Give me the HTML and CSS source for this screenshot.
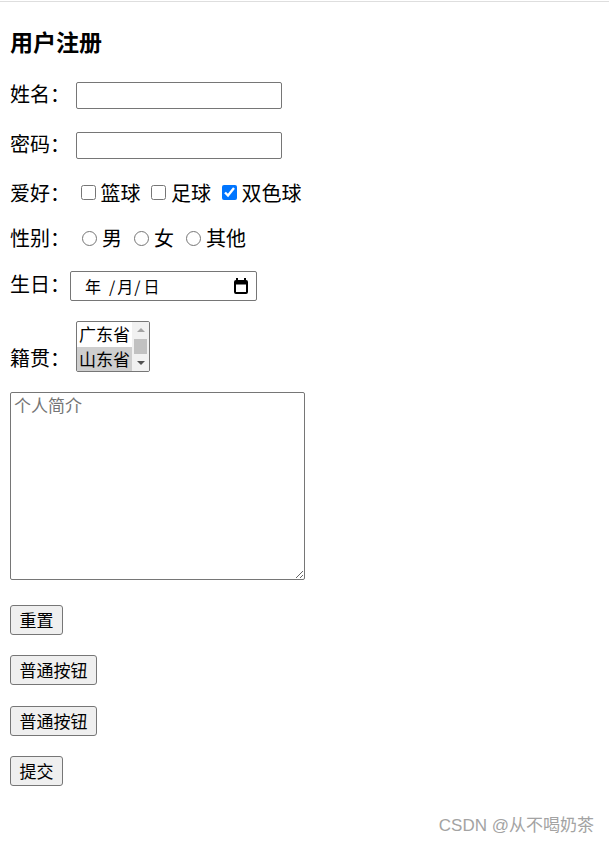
FILE: index.html
```html
<!DOCTYPE html>
<html lang="zh-CN">
<head>
<meta charset="utf-8">
<title>用户注册</title>
<link rel="stylesheet" href="styles.css">
</head>
<body>
<div class="topline"></div>
<form class="form">
  <h3 class="title">用户注册</h3>

  <div class="row row-name">
    <span class="lbl">姓名：</span>
    <input class="text-input" type="text" name="username">
  </div>

  <div class="row row-pwd">
    <span class="lbl">密码：</span>
    <input class="text-input" type="password" name="password">
  </div>

  <div class="row row-hobby">
    <span class="lbl lbl-plain">爱好：</span>
    <label class="opt"><input class="check" type="checkbox" name="hobby">篮球</label>
    <label class="opt"><input class="check" type="checkbox" name="hobby">足球</label>
    <label class="opt"><input class="check" type="checkbox" name="hobby" checked>双色球</label>
  </div>

  <div class="row row-gender">
    <span class="lbl lbl-plain">性别：</span>
    <label class="opt"><input class="radio" type="radio" name="gender">男</label>
    <label class="opt"><input class="radio" type="radio" name="gender">女</label>
    <label class="opt"><input class="radio" type="radio" name="gender">其他</label>
  </div>

  <div class="row row-birth">
    <span class="lbl">生日：</span>
    <div class="date" role="textbox" aria-label="生日">
      <span class="d-part d-year">年</span>
      <span class="d-sep d-sep1">/</span>
      <span class="d-part d-month">月</span>
      <span class="d-sep d-sep2">/</span>
      <span class="d-part d-day">日</span>
      <svg class="cal" viewBox="0 0 16 16" aria-hidden="true">
        <rect x="3" y="0" width="2" height="3" fill="#000"/>
        <rect x="11" y="0" width="2" height="3" fill="#000"/>
        <path fill="#000" fill-rule="evenodd" d="M3 2h10a2 2 0 0 1 2 2v10a2 2 0 0 1-2 2H3a2 2 0 0 1-2-2V4a2 2 0 0 1 2-2zM3 6.5v7.5h10V6.5z"/>
      </svg>
    </div>
  </div>

  <div class="row row-origin">
    <span class="lbl lbl-bottom">籍贯：</span>
    <div class="listbox" role="listbox" aria-label="籍贯">
      <div class="lb-options">
        <div class="lb-opt" role="option">广东省</div>
        <div class="lb-opt is-selected" role="option" aria-selected="true">山东省</div>
      </div>
      <div class="lb-scroll">
        <span class="lb-btn"><span class="lb-arrow lb-up"></span></span>
        <span class="lb-thumb"></span>
        <span class="lb-btn"><span class="lb-arrow lb-down"></span></span>
      </div>
    </div>
  </div>

  <textarea class="intro" placeholder="个人简介"></textarea>

  <button class="btn btn-reset" type="reset">重置</button>
  <button class="btn btn-2" type="button">普通按钮</button>
  <button class="btn btn-3" type="button">普通按钮</button>
  <button class="btn btn-4" type="submit">提交</button>
</form>
<div class="watermark">CSDN @从不喝奶茶</div>
</body>
</html>
```

FILE: styles.css
```css
* {
  box-sizing: border-box;
}

html,
body {
  margin: 0;
  background: #ffffff;
}

body {
  position: relative;
  min-height: 844px;
  font-family: "Noto Sans CJK SC", "Noto Sans", sans-serif;
  color: #000000;
}

.topline {
  height: 1px;
  margin-top: 1px;
  background: #dedede;
}

.form {
  display: flex;
  flex-direction: column;
  align-items: flex-start;
  padding: 0 10px;
}

.title {
  margin: 25px 0 0;
  font-size: 23px;
  line-height: 28px;
  font-weight: 700;
}

.row {
  display: flex;
  align-items: center;
  font-size: 20px;
  line-height: 24px;
}

.lbl {
  flex: none;
  width: 60px;
  line-height: 20px;
  margin-bottom: 4px;
}

.lbl-plain {
  line-height: 24px;
  margin-bottom: 0;
}

.row-name {
  margin-top: 27px;
}

.row-pwd {
  margin-top: 23px;
}

.row-hobby {
  margin-top: 22px;
}

.row-gender {
  margin-top: 21px;
}

.row-birth {
  margin-top: 21px;
}

.row-origin {
  margin-top: 20px;
  align-items: flex-end;
}

.lbl-bottom {
  line-height: 24px;
  margin-bottom: 2px;
}

.text-input {
  width: 206px;
  height: 27px;
  margin: 0 0 0 6px;
  padding: 1px 3px;
  border: 1px solid #767676;
  border-radius: 2px;
  font-family: inherit;
  font-size: 17px;
  background: #ffffff;
}

.opt {
  display: flex;
  align-items: center;
}

.check {
  width: 15px;
  height: 15px;
  margin: 0 5px 2px 10.5px;
}

.radio {
  width: 15px;
  height: 15px;
  margin: 0 5px 0 12px;
}

.date {
  display: flex;
  align-items: center;
  width: 187px;
  height: 30px;
  padding: 0 7px 0 14px;
  border: 1px solid #767676;
  border-radius: 2px;
  font-size: 16px;
  line-height: 20px;
  background: #ffffff;
}

.d-sep1 {
  margin-left: 8px;
}

.d-month {
  margin-left: 2px;
}

.d-sep2 {
  margin-left: 1px;
}

.d-day {
  margin-left: 3px;
}

.cal {
  width: 16px;
  height: 16px;
  margin-left: auto;
}

.listbox {
  display: flex;
  width: 74px;
  height: 51px;
  margin-left: 6px;
  border: 1px solid #767676;
  border-radius: 2px;
  overflow: hidden;
  background: #ffffff;
}

.lb-options {
  flex: 1;
  display: flex;
  flex-direction: column;
}

.lb-opt {
  height: 24.5px;
  padding: 0 0 0 2px;
  font-size: 17px;
  line-height: 24px;
  white-space: nowrap;
}

.lb-opt.is-selected {
  background: #cecece;
}

.lb-scroll {
  flex: none;
  width: 17px;
  display: flex;
  flex-direction: column;
  background: #f1f1f1;
}

.lb-btn {
  flex: none;
  height: 16px;
  display: flex;
  align-items: center;
  justify-content: center;
}

.lb-arrow {
  width: 0;
  height: 0;
  border-left: 4px solid transparent;
  border-right: 4px solid transparent;
}

.lb-up {
  border-bottom: 4px solid #a3a3a3;
}

.lb-down {
  border-top: 4px solid #505050;
}

.lb-thumb {
  flex: 1;
  margin: 1px 2px;
  background: #c1c1c1;
}

.intro {
  width: 295px;
  height: 188px;
  margin: 20px 0 0;
  padding: 2px 3px;
  border: 1px solid #767676;
  border-radius: 2px;
  font-family: "Noto Sans CJK SC", sans-serif;
  font-size: 17px;
  line-height: 20px;
  resize: both;
}

.intro::placeholder {
  color: #757575;
}

.btn {
  height: 30px;
  padding: 0 8.5px;
  border: 1px solid #767676;
  border-radius: 3px;
  background: #efefef;
  color: #000000;
  font-family: "Noto Sans CJK SC", sans-serif;
  font-size: 17px;
  line-height: 20px;
}

.btn-reset {
  margin-top: 25px;
}

.btn-2 {
  margin-top: 20px;
}

.btn-3 {
  margin-top: 21px;
}

.btn-4 {
  margin-top: 20px;
}

.watermark {
  position: absolute;
  right: 15px;
  bottom: 6px;
  font-family: "Liberation Sans", "Noto Sans CJK SC", sans-serif;
  font-size: 17px;
  line-height: 24px;
  color: #a3a3a3;
}
```
